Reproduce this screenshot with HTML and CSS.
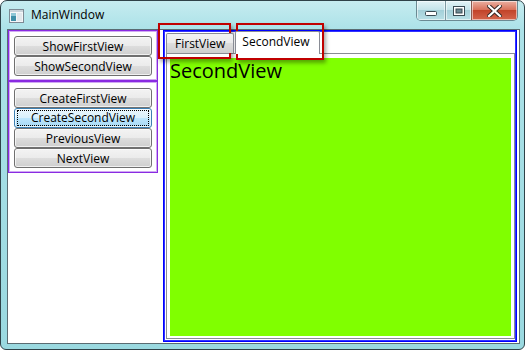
FILE: index.html
```html
<!DOCTYPE html>
<html lang="en">
<head>
  <meta charset="UTF-8">
  <meta name="viewport" content="width=device-width, initial-scale=1.0">
  <title>MainWindow</title>
  <link rel="stylesheet" href="styles.css">
</head>
<body>
  <div class="window">
    <div class="titlebar">
      <svg class="app-icon" width="15" height="14" viewBox="0 0 15 14">
        <rect x="0.5" y="0.5" width="14" height="13" fill="#f4f6f8" stroke="#7d8a94"/>
        <rect x="1" y="1" width="13" height="2" fill="#c9d3da"/>
        <rect x="2" y="4" width="5" height="8" fill="#3f8fa8"/>
        <rect x="2" y="4" width="5" height="3" fill="#8fc7d6"/>
        <rect x="8" y="4" width="5" height="8" fill="#e2e8ec"/>
      </svg>
      <span class="title">MainWindow</span>
      <div class="caption-buttons">
        <div class="cap cap-min">
          <svg width="12" height="6" viewBox="0 0 12 6"><rect x="0.5" y="1.5" width="11" height="4" rx="1" fill="#fff" stroke="#3a4a52"/></svg>
        </div>
        <div class="cap cap-max">
          <svg width="12" height="10" viewBox="0 0 12 10"><rect x="0.5" y="0.5" width="11" height="9" fill="#fff" stroke="#3a4a52"/><rect x="3" y="3" width="6" height="4" fill="#6c8a94" stroke="#3a4a52"/></svg>
        </div>
        <div class="cap cap-close">
          <svg width="15" height="12" viewBox="0 0 15 12"><path d="M2 1 L13 11 M13 1 L2 11" stroke="#3a2a26" stroke-width="4.2" stroke-linecap="square"/><path d="M2 1 L13 11 M13 1 L2 11" stroke="#fff" stroke-width="2.2" stroke-linecap="square"/></svg>
        </div>
      </div>
    </div>

    <div class="client">
      <div class="side">
        <div class="group group-top">
          <button class="btn">ShowFirstView</button>
          <button class="btn">ShowSecondView</button>
        </div>
        <div class="group group-bottom">
          <button class="btn">CreateFirstView</button>
          <button class="btn btn-focused"><span class="focus-ring">CreateSecondView</span></button>
          <button class="btn">PreviousView</button>
          <button class="btn">NextView</button>
        </div>
      </div>

      <div class="host">
        <div class="tabstrip">
          <div class="tab">FirstView</div>
          <div class="tab tab-selected">SecondView</div>
        </div>
        <div class="tabpanel">
          <div class="view">SecondView</div>
        </div>
      </div>
    </div>

    <div class="mark mark-first"></div>
    <div class="mark mark-second"></div>
  </div>
</body>
</html>
```

FILE: styles.css
```css
body {
  margin: 0;
  background: #fff;
  font-family: "Open Sans", "Noto Sans", sans-serif;
}
.window {
  position: relative;
  box-sizing: border-box;
  width: 525px;
  height: 350px;
  border: 1px solid #2f4248;
  border-radius: 7px 7px 6px 6px;
  background: linear-gradient(to bottom, #c6ecf0 0, #ace2e8 28px, #9ad9e0 100%);
  overflow: hidden;
}
.titlebar {
  display: flex;
  align-items: flex-start;
  height: 28px;
}
.app-icon {
  margin: 8px 0 0 8px;
}
.title {
  margin: 5px 0 0 7px;
  font-size: 12px;
  color: #000;
}
.caption-buttons {
  display: flex;
  margin-left: auto;
  margin-right: 6px;
  height: 19px;
  border: 1px solid #6b8a93;
  border-top: none;
  border-radius: 0 0 5px 5px;
  overflow: hidden;
}
.cap {
  display: flex;
  align-items: center;
  justify-content: center;
  height: 19px;
  background: linear-gradient(to bottom, #e3f3f6 0, #c5e4ea 45%, #a4d0d9 50%, #b9e0e6 100%);
  box-shadow: inset 0 0 0 1px rgba(255, 255, 255, 0.55);
}
.cap-min {
  width: 28px;
  border-right: 1px solid #7d9aa2;
}
.cap-min svg {
  margin-top: 5px;
}
.cap-max {
  width: 25px;
  border-right: 1px solid #8a5a50;
}
.cap-close {
  width: 45px;
  background: linear-gradient(to bottom, #eab0a2 0, #d9735c 45%, #c2442a 50%, #d4654c 100%);
}
.client {
  box-sizing: border-box;
  display: flex;
  align-items: flex-start;
  width: 513px;
  height: 315px;
  margin: 0 0 0 6px;
  border: 1px solid #5a6c72;
  background: #fff;
}
.side {
  width: 150px;
  margin-right: 5px;
}
.group {
  display: flex;
  flex-direction: column;
  border: 1px solid #8a2be2;
  box-shadow: inset 0 0 0 1px rgba(138, 43, 226, 0.4);
}
.group-top {
  padding: 5px 5px 4px;
}
.group-bottom {
  padding: 6px 5px 4px;
}
.btn {
  box-sizing: border-box;
  height: 20px;
  padding: 1px 0 0;
  border: 1px solid #707070;
  border-radius: 3px;
  background: linear-gradient(to bottom, #f3f3f3 0, #ebebeb 50%, #dddddd 50%, #cfcfcf 100%);
  box-shadow: inset 0 0 0 1px rgba(255, 255, 255, 0.7);
  font-family: "Open Sans", "Noto Sans", sans-serif;
  font-size: 12px;
  line-height: 16px;
  color: #000;
}
.btn-focused {
  border-color: #3c7fb1;
  background: linear-gradient(to bottom, #eaf6fd 0, #d9f0fc 50%, #bee6fd 50%, #a7d9f5 100%);
  padding: 2px 2px 1px;
}
.focus-ring {
  display: block;
  height: 14px;
  line-height: 14px;
  border: 1px dotted #000;
  margin-top: -1px;
}
.host {
  box-sizing: border-box;
  width: 354px;
  height: 312px;
  padding: 0 1px 2px 2px;
  border: 1px solid #0000ff;
  box-shadow: inset 0 0 0 1px rgba(0, 0, 255, 0.8);
  display: flex;
  flex-direction: column;
}
.tabstrip {
  display: flex;
  align-items: flex-start;
  height: 22px;
  position: relative;
  z-index: 1;
}
.tab {
  box-sizing: border-box;
  height: 20px;
  margin-top: 2px;
  padding: 0 8px;
  border: 1px solid #898c95;
  border-bottom: none;
  border-radius: 2px 2px 0 0;
  background: linear-gradient(to bottom, #f2f2f2 0, #ebebeb 50%, #dddddd 50%, #cfcfcf 100%);
  font-size: 12px;
  line-height: 19px;
  color: #000;
}
.tab-selected {
  height: 23px;
  margin-top: 0;
  margin-left: 1px;
  padding: 0 9px 0 6px;
  background: #fff;
  line-height: 20px;
}
.tabpanel {
  flex: 1;
  display: flex;
  padding: 4px 3px 2px 3px;
  border: 1px solid #898c95;
  background: #fff;
}
.view {
  flex: 1;
  background: #80ff00;
  font-size: 20px;
  line-height: 26px;
  color: #000;
}
.mark {
  position: absolute;
  box-sizing: border-box;
  border: 2px solid #c00000;
  box-shadow: 2px 3px 4px rgba(0, 0, 0, 0.35);
}
.mark-first {
  left: 157px;
  top: 22px;
  width: 73px;
  height: 36px;
}
.mark-second {
  left: 235px;
  top: 22px;
  width: 88px;
  height: 37px;
}
```
